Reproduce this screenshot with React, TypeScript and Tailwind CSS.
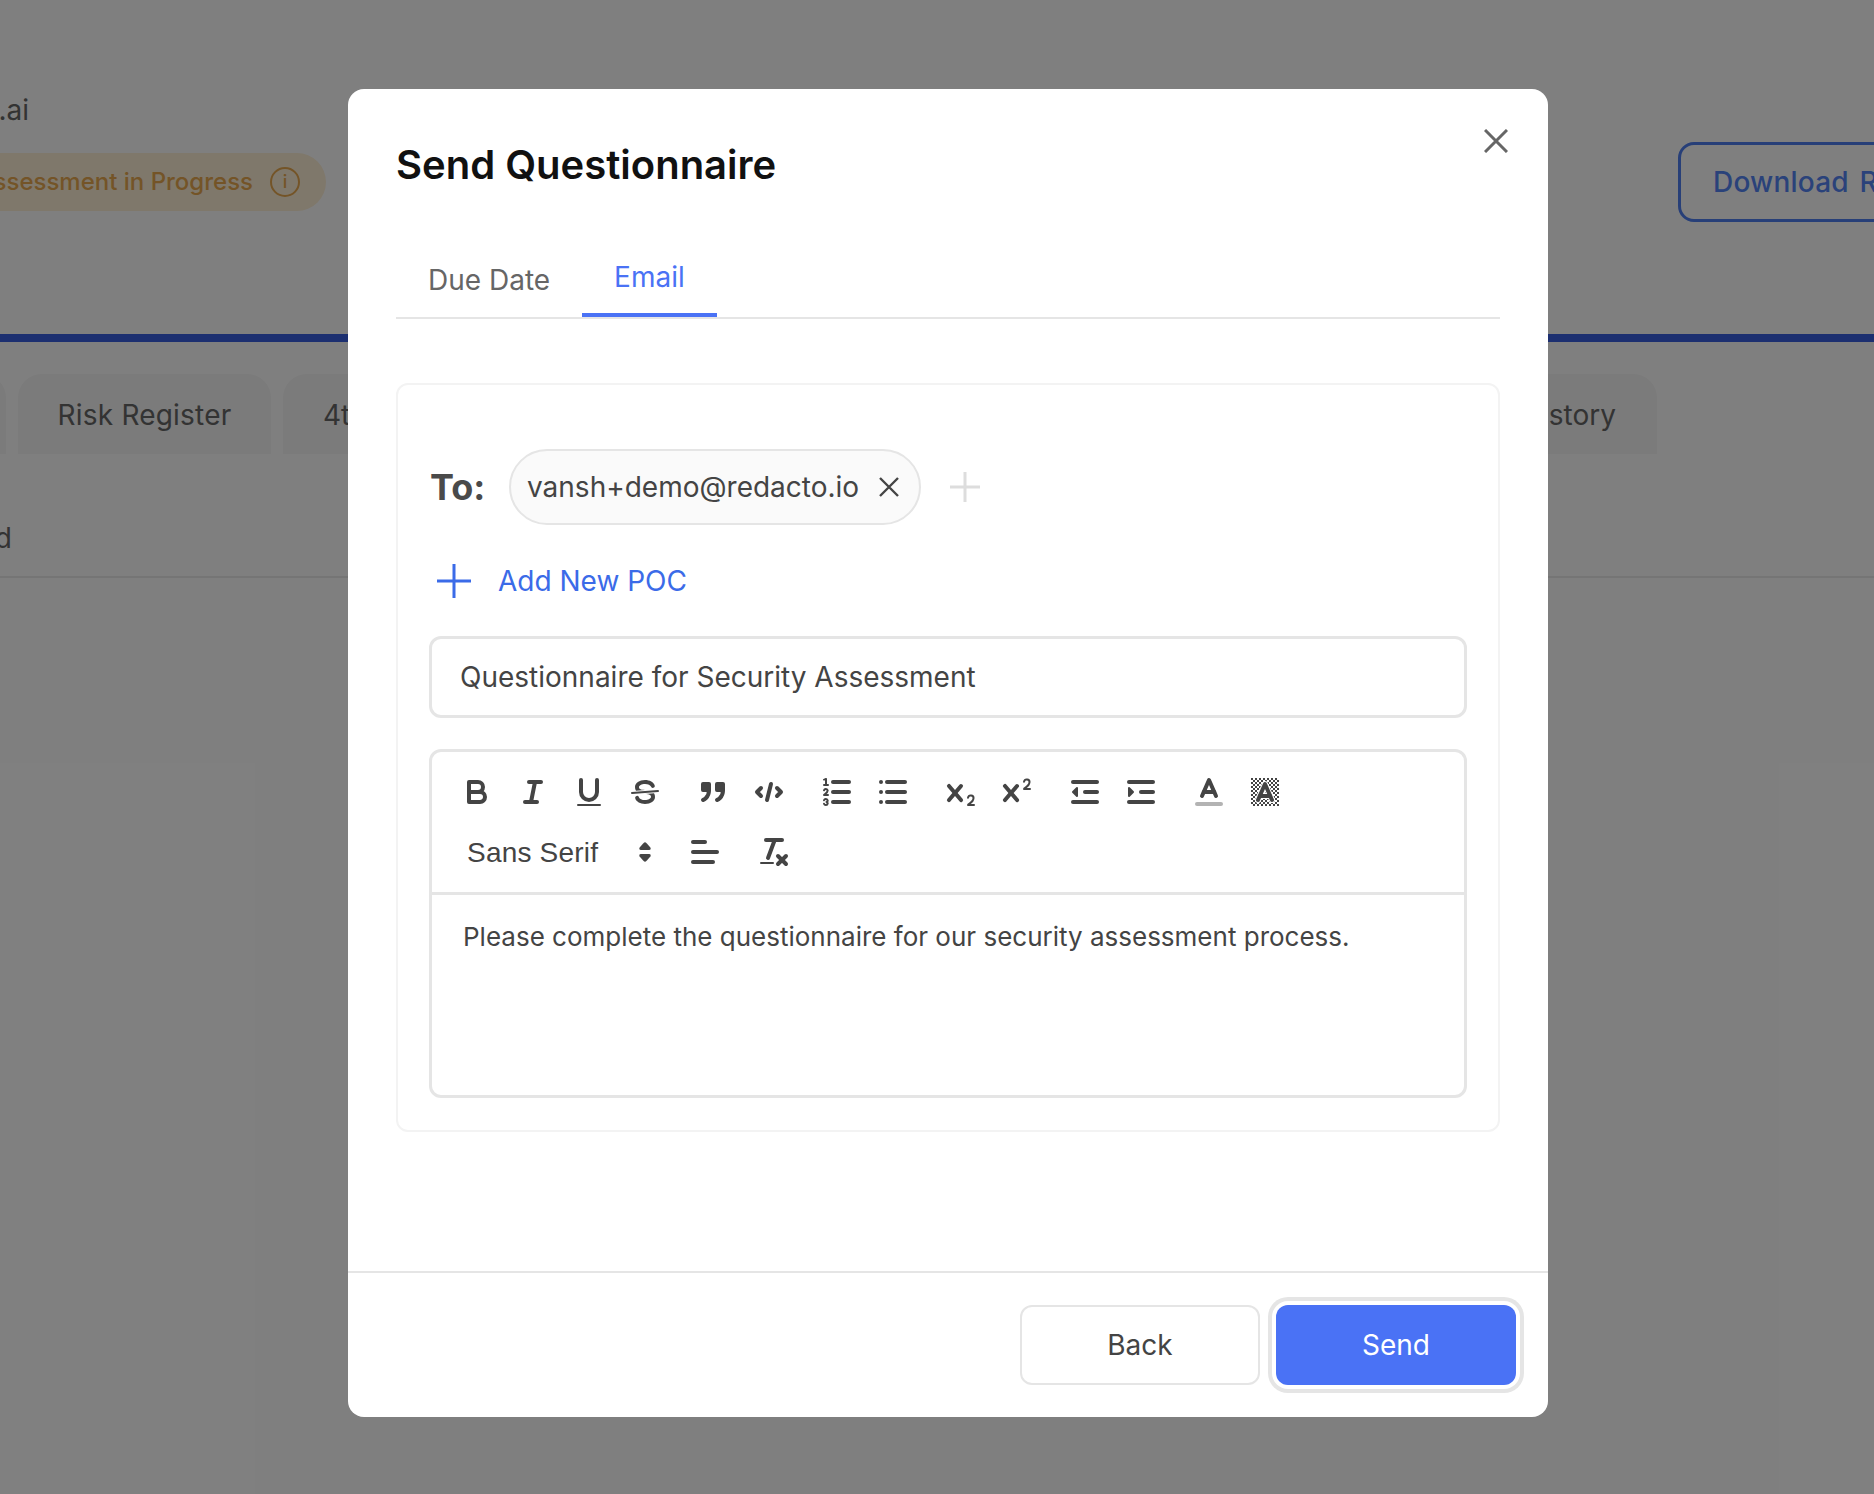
import type { ReactNode } from "react";

const ink = "#444";

function Icon({ children }: { children: ReactNode }) {
  return (
    <span className="flex h-[48px] w-[56px] shrink-0 items-center justify-center">
      <svg
        viewBox="0 0 18 18"
        className="h-[36px] w-[36px]"
        fill="none"
        stroke={ink}
        strokeWidth={2}
        strokeLinecap="round"
        strokeLinejoin="round"
      >
        {children}
      </svg>
    </span>
  );
}

const xMark =
  "M9.65,5.241a1,1,0,0,0-1.409.108L6,7.964,3.759,5.349A1,1,0,0,0,2.192,6.59178Q2.21541,6.6213,2.241,6.649L4.684,9.5,2.241,12.35A1,1,0,0,0,3.71,13.70722q0.02557-.02768.049-0.05722L6,11.036,8.241,13.65a1,1,0,1,0,1.567-1.24277Q9.78459,12.3777,9.759,12.35L7.316,9.5,9.759,6.651A1,1,0,0,0,9.65,5.241Z";

function Toolbar() {
  return (
    <div className="flex flex-col gap-[12px] border-b-[3px] border-[#e5e5e5] pb-[16px] pl-[17px] pt-[16px]">
      <div className="flex gap-[12px]">
        <div className="flex">
          <Icon>
            <path d="M5,4H9.5A2.5,2.5,0,0,1,12,6.5v0A2.5,2.5,0,0,1,9.5,9H5V4Z" />
            <path d="M5,9h5.5A2.5,2.5,0,0,1,13,11.5v0A2.5,2.5,0,0,1,10.5,14H5V9Z" />
          </Icon>
          <Icon>
            <line x1="7" x2="13" y1="4" y2="4" />
            <line x1="5" x2="11" y1="14" y2="14" />
            <line x1="8" x2="10" y1="14" y2="4" />
          </Icon>
          <Icon>
            <path d="M5,3V9a4.012,4.012,0,0,0,4,4H9a3.991,3.991,0,0,0,4-4V3" />
            <rect x="3" y="15" width="12" height="1" rx=".5" fill={ink} stroke="none" />
          </Icon>
          <Icon>
            <line x1="15.5" x2="2.5" y1="8.5" y2="9.5" strokeWidth={1} />
            <path
              fill={ink}
              stroke="none"
              d="M9.007,8C6.542,7.791,6,7.519,6,6.5,6,5.792,7.283,5,9,5c1.571,0,2.765.679,2.969,1.309a1,1,0,0,0,1.9-.617C13.356,4.106,11.354,3,9,3,6.2,3,4,4.538,4,6.5a3.2,3.2,0,0,0,.5,1.843Z"
            />
            <path
              fill={ink}
              stroke="none"
              d="M8.984,10C11.457,10.208,12,10.479,12,11.5c0,.708-1.283,1.5-3,1.5-1.571,0-2.765-.679-2.969-1.309a1,1,0,1,0-1.9.617C4.644,13.894,6.646,15,9,15c2.8,0,5-1.538,5-3.5a3.2,3.2,0,0,0-.5-1.843Z"
            />
          </Icon>
        </div>
        <div className="flex">
          <Icon>
            <rect x="4" y="5" width="3" height="3" fill={ink} />
            <rect x="11" y="5" width="3" height="3" fill={ink} />
            <path d="M7,8c0,4.031-3,5-3,5" />
            <path d="M14,8c0,4.031-3,5-3,5" />
          </Icon>
          <Icon>
            <polyline points="5 7 3 9 5 11" />
            <polyline points="13 7 15 9 13 11" />
            <line x1="10" x2="8" y1="5" y2="13" />
          </Icon>
        </div>
        <div className="flex">
          <Icon>
            <line x1="7" x2="15" y1="4" y2="4" />
            <line x1="7" x2="15" y1="9" y2="9" />
            <line x1="7" x2="15" y1="14" y2="14" />
            <line x1="2.5" x2="4.5" y1="5.5" y2="5.5" strokeWidth={1} />
            <path
              fill={ink}
              stroke="none"
              d="M3.5,6A0.5,0.5,0,0,1,3,5.5V3.085l-0.276.138A0.5,0.5,0,0,1,2.053,3c-0.124-.247-0.023-0.324.224-0.447l1-.5A0.5,0.5,0,0,1,4,2.5v3A0.5,0.5,0,0,1,3.5,6Z"
            />
            <path strokeWidth={1} d="M4.5,10.5h-2c0-.234,1.85-1.076,1.85-2.234A0.959,0.959,0,0,0,2.5,8.156" />
            <path
              strokeWidth={1}
              d="M2.5,14.846a0.959,0.959,0,0,0,1.85-.109A0.7,0.7,0,0,0,3.75,14a0.688,0.688,0,0,0,.6-0.736,0.959,0.959,0,0,0-1.85-.109"
            />
          </Icon>
          <Icon>
            <line x1="6" x2="15" y1="4" y2="4" />
            <line x1="6" x2="15" y1="9" y2="9" />
            <line x1="6" x2="15" y1="14" y2="14" />
            <line x1="3" x2="3" y1="4" y2="4" />
            <line x1="3" x2="3" y1="9" y2="9" />
            <line x1="3" x2="3" y1="14" y2="14" />
          </Icon>
        </div>
        <div className="flex">
          <Icon>
            <path
              fill={ink}
              stroke="none"
              d="M15.5,15H13.861a3.858,3.858,0,0,0,1.914-2.975,1.8,1.8,0,0,0-1.6-1.751A1.921,1.921,0,0,0,12.021,11.7a0.50013,0.50013,0,1,0,.957.291h0a0.914,0.914,0,0,1,1.053-.725,0.81,0.81,0,0,1,.744.762c0,1.076-1.16971,1.86982-1.93971,2.43082A1.45639,1.45639,0,0,0,12,15.5a0.5,0.5,0,0,0,.5.5h3A0.5,0.5,0,0,0,15.5,15Z"
            />
            <path fill={ink} stroke="none" d={xMark} />
          </Icon>
          <Icon>
            <path
              fill={ink}
              stroke="none"
              d="M15.5,7H13.861a4.015,4.015,0,0,0,1.914-2.975,1.8,1.8,0,0,0-1.6-1.751A1.922,1.922,0,0,0,12.021,3.7a0.5,0.5,0,1,0,.957.291,0.917,0.917,0,0,1,1.053-.725,0.81,0.81,0,0,1,.744.762c0,1.077-1.164,1.925-1.934,2.486A1.423,1.423,0,0,0,12,7.5a0.5,0.5,0,0,0,.5.5h3A0.5,0.5,0,0,0,15.5,7Z"
            />
            <path fill={ink} stroke="none" d={xMark} />
          </Icon>
        </div>
        <div className="flex">
          <Icon>
            <line x1="3" x2="15" y1="14" y2="14" />
            <line x1="3" x2="15" y1="4" y2="4" />
            <line x1="9" x2="15" y1="9" y2="9" />
            <polyline points="5 7 5 11 3 9 5 7" fill={ink} strokeWidth={1} />
          </Icon>
          <Icon>
            <line x1="3" x2="15" y1="14" y2="14" />
            <line x1="3" x2="15" y1="4" y2="4" />
            <line x1="9" x2="15" y1="9" y2="9" />
            <polyline points="3 7 3 11 5 9 3 7" fill={ink} strokeWidth={1} />
          </Icon>
        </div>
        <div className="flex">
          <Icon>
            <line x1="3" x2="15" y1="15" y2="15" stroke="#b3b3b3" />
            <polyline points="5.5 11 9 3 12.5 11" />
            <line x1="11.63" x2="6.38" y1="9" y2="9" />
          </Icon>
          <Icon>
            <defs>
              <pattern id="checker" width="2" height="2" patternUnits="userSpaceOnUse">
                <rect width="1" height="1" fill={ink} stroke="none" />
                <rect x="1" y="1" width="1" height="1" fill={ink} stroke="none" />
              </pattern>
            </defs>
            <rect x="2" y="2" width="14" height="14" fill="url(#checker)" stroke="none" />
            <polyline points="5.5 13 9 5 12.5 13" stroke="#fff" strokeWidth={3} />
            <line x1="11.63" x2="6.38" y1="11" y2="11" stroke="#fff" strokeWidth={3} />
            <polyline points="5.5 13 9 5 12.5 13" />
            <line x1="11.63" x2="6.38" y1="11" y2="11" />
          </Icon>
        </div>
      </div>
      <div className="flex items-center gap-[13px]">
        <div className="ml-[2px] flex h-[48px] w-[213px] items-center justify-between pl-[16px] pr-[13px]">
          <span className="pt-[1px] font-['Liberation_Sans',sans-serif] text-[28px] font-normal tracking-[0.2px] text-[#444]">
            Sans Serif
          </span>
          <svg viewBox="0 0 12 20" className="h-[20px] w-[12px]" fill={ink}>
            <path d="M4.6 1 Q6 -.4 7.4 1 L11.4 5.6 Q12.4 8 10 8 H2 Q-.4 8 .6 5.6 Z" />
            <path d="M4.6 19 Q6 20.4 7.4 19 L11.4 14.4 Q12.4 12 10 12 H2 Q-.4 12 .6 14.4 Z" />
          </svg>
        </div>
        <Icon>
          <line x1="3" x2="15" y1="9" y2="9" />
          <line x1="3" x2="13" y1="14" y2="14" />
          <line x1="3" x2="9" y1="4" y2="4" />
        </Icon>
        <Icon>
          <line x1="5" x2="13" y1="3" y2="3" />
          <line x1="6" x2="9.35" y1="12" y2="3" />
          <line x1="11" x2="15" y1="11" y2="15" />
          <line x1="15" x2="11" y1="11" y2="15" />
          <rect x="2" y="14" width="7" height="1" rx=".5" fill={ink} stroke="none" />
        </Icon>
      </div>
    </div>
  );
}

function Backdrop() {
  return (
    <div className="flex h-full w-[1874px] flex-col bg-white text-[28px] text-[#666]">
      <div className="flex h-[334px] justify-between pt-[90px]">
        <div className="-ml-[116px]">
          <div className="h-[40px] w-[145px] text-right leading-[40px] text-[#666]">redacto.ai</div>
          <div className="mt-[23px] flex h-[58px] w-[442px] items-center justify-end gap-[17px] rounded-full bg-[#fff0d6] pr-[26px] text-[24px] font-medium text-[#e8a94f]">
            <span>Assessment in Progress</span>
            <span className="flex h-[30px] w-[30px] items-center justify-center rounded-full border-2 border-[#e8a94f] text-[18px] leading-none">
              i
            </span>
          </div>
        </div>
        <div className="-mr-[80px] mt-[52px] flex h-[80px] w-[276px] items-center rounded-[16px] border-[3px] border-[#4f7ff0] pl-[32px] font-medium tracking-[0.2px] whitespace-nowrap text-[#5585f5] [word-spacing:3px]">
          Download Report
        </div>
      </div>
      <div className="h-[8px] bg-[#385ee0]" />
      <div className="mt-[32px] flex gap-[12px]">
        <div className="-ml-[40px] h-[80px] w-[46px] rounded-tr-[24px] bg-[#f6f6f6]" />
        <div className="flex h-[80px] w-[253px] items-center justify-center rounded-t-[24px] bg-[#f6f6f6] pt-[2px] tracking-[0.2px]">
          Risk Register
        </div>
        <div className="flex h-[80px] w-[1000px] items-center rounded-t-[24px] bg-[#f6f6f6] pl-[40px] pt-[2px]">4th Party</div>
        <div className="flex h-[80px] w-[362px] items-center justify-end rounded-t-[24px] bg-[#f6f6f6] pr-[41px] pt-[2px]">History</div>
      </div>
      <div className="flex h-[124px] items-center border-b-2 border-[#eaeaea]">
        <span className="-ml-[130px] mt-[46px] w-[142px] text-right">Assessed</span>
      </div>
    </div>
  );
}

export default function App() {
  return (
    <div className="relative h-[1494px] w-full overflow-hidden bg-white font-['Inter',sans-serif]">
      <Backdrop />
      <div className="absolute inset-0 bg-black/50" />
      <div className="absolute left-[348px] top-[89px] flex h-[1328px] w-[1200px] flex-col rounded-[16px] bg-white">
        <svg viewBox="0 0 24 24" className="absolute right-[40px] top-[40px] h-[24px] w-[24px]" stroke="#666" strokeWidth={3}>
          <path d="M1 1 23 23M23 1 1 23" />
        </svg>
        <h2 className="mx-[48px] mt-[52px] h-[48px] text-[40px] leading-[48px] font-semibold text-[#111]">Send Questionnaire</h2>
        <div className="mx-[48px] mt-[66px] flex h-[64px] border-b-2 border-[#e5e5e5] text-[28px]">
          <div className="flex h-[62px] items-center px-[32px] pb-[13px] text-[#666]">Due Date</div>
          <div className="flex h-[62px] items-center border-b-4 border-[#4a72f5] px-[32px] pb-[14px] text-[#4a72f5]">Email</div>
        </div>
        <div className="mx-[48px] mt-[64px] flex flex-col rounded-[12px] border-2 border-[#f3f3f3] px-[31px] pb-[32px] pt-[64px]">
          <div className="flex h-[76px] items-center">
            <span className="ml-[1px] w-[79px] text-[36px] font-bold text-[#4a4a4a]">To:</span>
            <div className="flex h-[76px] w-[412px] items-center justify-between rounded-full border-2 border-[#e5e5e5] bg-[#fafafa] pl-[16px] pr-[20px]">
              <span className="text-[28px] text-[#444]">vansh+demo@redacto.io</span>
              <svg viewBox="0 0 20 20" className="h-[20px] w-[20px]" stroke="#444" strokeWidth={2.4}>
                <path d="M1 1 19 19M19 1 1 19" />
              </svg>
            </div>
            <svg viewBox="0 0 30 30" className="ml-[29px] h-[30px] w-[30px]" stroke="#ddd" strokeWidth={3}>
              <path d="M15 0V30M0 15H30" />
            </svg>
          </div>
          <div className="mt-[31px] flex h-[50px] items-center">
            <svg viewBox="0 0 34 34" className="ml-[8px] h-[34px] w-[34px]" stroke="#3b6be8" strokeWidth={3}>
              <path d="M17 0V34M0 17H34" />
            </svg>
            <span className="ml-[27px] text-[28px] text-[#3b6be8]">Add New POC</span>
          </div>
          <div className="mt-[30px] flex h-[82px] items-center rounded-[12px] border-[3px] border-[#e5e5e5] pl-[28px] text-[28px] text-[#444]">
            Questionnaire for Security Assessment
          </div>
          <div className="mt-[31px] flex h-[349px] flex-col rounded-[12px] border-[3px] border-[#e5e5e5]">
            <Toolbar />
            <div className="px-[31px] pt-[22px] text-[26px] leading-[40px] text-[#444]">
              Please complete the questionnaire for our security assessment process.
            </div>
          </div>
        </div>
        <div className="mt-auto flex h-[146px] items-center justify-end gap-[16px] border-t-2 border-[#e5e5e5] pr-[32px]">
          <button className="h-[80px] w-[240px] rounded-[12px] border-2 border-[#e5e5e5] bg-white text-[28px] text-[#444]">Back</button>
          <button className="h-[80px] w-[240px] rounded-[12px] bg-[#4a72f5] text-[28px] text-white shadow-[0_0_0_4px_#fff,0_0_0_8px_#e5e5e5]">
            Send
          </button>
        </div>
      </div>
    </div>
  );
}
